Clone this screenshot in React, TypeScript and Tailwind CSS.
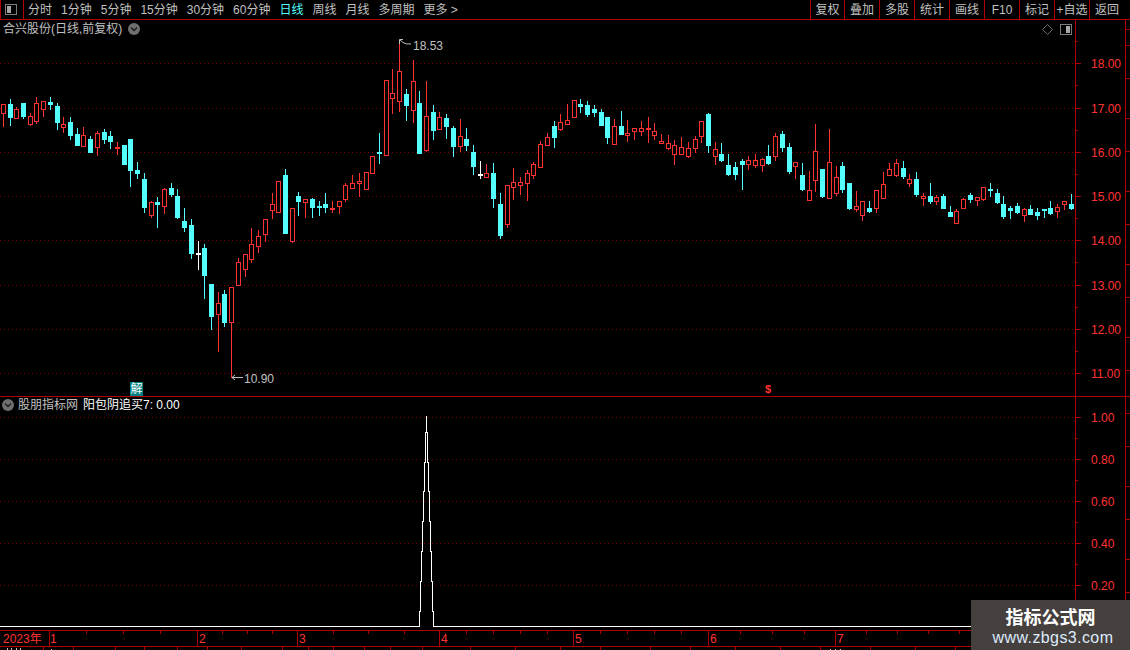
// 日线K线图 + 副图指标
import React from "react";

const RED = "#ff3232";
const LINE = "#b00000";
const DOT = "#800000";
const GRAY = "#c0c0c0";
const CYAN = "#54ffff";
const FONT = "font-['Liberation_Sans','Noto_Sans_CJK_SC',sans-serif]";

// [type, wickTop, bodyTop, bodyBottom, wickBottom] 単位はページのpx
type Candle = ["r" | "c" | "w", number, number, number, number];

const candles: Candle[] = [
  ["r",104,104,113,126],["c",99,104,117,125],["r",107,109,118,118],["c",103,103,116,118],["r",113,116,124,125],
  ["r",97,103,121,123],["r",101,101,109,116],["c",97,102,104,109],["c",103,106,122,129],["r",117,124,127,132],
  ["c",117,122,135,139],["c",128,134,145,145],["r",127,135,146,146],["c",136,139,152,152],["r",131,133,147,155],
  ["c",129,132,139,143],["c",131,136,141,148],["r",142,147,148,154],["c",145,145,164,164],["c",139,139,170,186],
  ["c",162,170,173,178],["c",173,179,207,212],["r",201,202,215,217],["c",197,202,204,227],["r",188,189,206,213],
  ["c",183,188,194,196],["c",189,196,217,218],["c",208,221,227,231],["c",219,225,253,258],["w",241,253,254,269],
  ["c",244,248,275,298],["c",284,284,316,329],["r",292,303,314,351],["c",290,294,322,326],["r",287,287,322,377],
  ["r",258,262,285,285],["r",254,254,269,276],["r",228,244,259,262],["r",230,236,246,252],["r",219,219,234,241],
  ["r",193,204,210,218],["r",181,181,212,212],["c",169,175,233,233],["r",208,208,241,242],["c",192,196,201,215],
  ["r",199,199,202,217],["c",198,199,207,217],["c",201,206,207,215],["c",193,204,207,212],["r",201,208,209,212],
  ["r",201,201,206,213],["r",183,185,199,201],["r",175,183,188,188],["r",173,181,183,196],["r",172,172,189,189],
  ["r",156,156,173,173],["c",133,152,153,163],["r",80,80,155,155],["r",69,93,98,113],["r",43,71,101,111],
  ["c",89,94,105,120],["r",60,81,110,122],["c",91,103,153,153],["r",81,116,150,151],["c",105,112,130,139],
  ["r",112,117,129,129],["c",114,118,126,138],["c",126,128,146,156],["r",119,136,146,151],["c",128,139,145,150],
  ["c",145,152,166,174],["w",161,174,175,178],["r",164,173,177,177],["c",163,173,198,207],["c",193,204,235,238],
  ["r",185,185,224,227],["r",168,182,187,199],["r",177,182,185,194],["r",170,173,183,200],["r",162,164,175,178],
  ["r",141,144,167,167],["r",133,137,145,145],["c",121,126,137,147],["r",114,122,129,130],["r",104,120,124,124],
  ["r",100,100,117,117],["c",99,104,106,112],["c",101,105,114,116],["c",105,109,112,116],["c",109,112,125,125],
  ["c",117,117,137,143],["r",119,126,144,144],["c",111,126,134,134],["r",120,133,135,141],["r",128,128,131,139],
  ["r",121,128,131,135],["r",117,128,129,142],["r",123,131,135,139],["r",134,141,143,143],["r",135,143,148,149],
  ["r",140,145,154,164],["r",137,147,154,154],["r",142,148,156,157],["r",136,139,148,152],["r",121,121,136,142],
  ["c",113,114,145,152],["r",142,149,156,164],["c",143,154,160,161],["c",154,165,174,175],["c",162,167,174,179],
  ["c",159,161,164,189],["r",156,160,164,169],["r",154,160,165,167],["r",158,159,165,171],["c",145,156,163,164],
  ["r",133,136,156,160],["c",131,134,147,151],["c",143,147,171,173],["r",162,162,166,178],["c",163,175,189,190],
  ["r",171,190,200,200],["r",124,151,180,191],["c",169,169,196,197],["r",129,162,198,198],["r",166,177,193,195],
  ["c",162,166,189,192],["c",183,183,208,209],["r",191,206,209,211],["r",201,201,215,220],["c",201,208,211,212],
  ["r",190,190,208,212],["r",172,184,198,198],["r",163,169,175,175],["r",159,163,175,176],["c",161,168,176,178],
  ["r",174,179,183,186],["c",172,179,194,196],["r",193,196,198,205],["c",183,196,201,203],["r",195,197,201,204],
  ["c",194,196,208,208],["c",206,212,216,216],["r",209,211,223,223],["r",198,199,208,208],["c",193,195,199,202],
  ["r",197,197,200,205],["r",187,187,199,200],["c",183,189,190,196],["c",189,193,202,203],["c",196,204,216,218],
  ["c",206,208,210,218],["c",203,206,212,213],["r",208,209,215,221],["c",205,209,214,214],["c",208,212,215,219],
  ["c",209,209,210,217],["c",201,208,213,214],["r",204,207,211,217],["r",201,201,204,209],["c",194,204,208,209],
];

const priceLabels = [
  { y: 63, t: "18.00" }, { y: 108, t: "17.00" }, { y: 152, t: "16.00" }, { y: 196, t: "15.00" },
  { y: 240, t: "14.00" }, { y: 285, t: "13.00" }, { y: 329, t: "12.00" }, { y: 373, t: "11.00" },
];
const priceMinor = [41, 85, 130, 174, 218, 262, 307, 351];
const indLabels = [
  { y: 417, t: "1.00" }, { y: 459, t: "0.80" }, { y: 501, t: "0.60" }, { y: 543, t: "0.40" }, { y: 585, t: "0.20" },
];
const indMinor = [438, 480, 522, 564, 606];
const sideTicks = [29, 45, 78, 118, 151, 191, 224, 264, 297, 337, 370, 413, 446, 486, 519, 559, 592];

const leftTabs = ["分时", "1分钟", "5分钟", "15分钟", "30分钟", "60分钟", "日线", "周线", "月线", "多周期", "更多 >"];
const rightTabs = ["复权", "叠加", "多股", "统计", "画线", "F10", "标记", "+自选", "返回"];

const months = [
  { x: 49, t: "1" }, { x: 197, t: "2" }, { x: 297, t: "3" }, { x: 439, t: "4" },
  { x: 573, t: "5" }, { x: 708, t: "6" }, { x: 835, t: "7" },
];
const monthMinor = [86, 123, 160, 222, 247, 272, 333, 368, 404, 466, 493, 520, 547, 600, 627, 654, 681, 740, 772, 804, 866, 897, 928, 959];
const stripTicks = [43, 73, 115, 144, 177, 207, 241, 282, 308, 333, 364, 390, 422, 470, 515, 560, 600, 650, 690, 735, 780, 820, 870, 915, 955];

// 丸いシェブロンボタン
const ChevronDot = () => (
  <svg width="12" height="12" viewBox="0 0 12 12" className="shrink-0">
    <circle cx="6" cy="6" r="6" fill="#6f6f6f" />
    <path d="M3 4.6 L6 7.6 L9 4.6" fill="none" stroke="#1c1c1c" strokeWidth="1.4" />
  </svg>
);

// パネル切替アイコン
const PanelIcon = ({ side }: { side: "left" | "right" }) => (
  <svg width="12" height="11" viewBox="0 0 12 11" className="shrink-0" shapeRendering="crispEdges">
    <rect x="0.5" y="0.5" width="11" height="10" rx="1" fill="#000" stroke="#7c7c7c" />
    <rect x={side === "left" ? 2 : 6} y="2" width="4" height="7" fill="#a8a8a8" />
  </svg>
);

const Toolbar = () => (
  <div className={`flex h-[20px] shrink-0 items-center border-b border-[#b00000] text-[12px] text-[#c0c0c0] ${FONT}`}>
    <div className="flex h-full w-[24px] shrink-0 items-center border-x border-[#b00000] pl-[4px]">
      <PanelIcon side="left" />
    </div>
    <div className="ml-[4px] flex gap-[9px]">
      {leftTabs.map((t) => (
        <span key={t} className={t === "日线" ? "text-[#54ffff]" : ""}>
          {t}
        </span>
      ))}
    </div>
    <div className="ml-auto flex h-full pr-[6px]">
      {rightTabs.map((t, i) => (
        <div
          key={t}
          className={`flex h-full items-center justify-center border-l border-[#b00000] whitespace-nowrap ${i === 0 ? "w-[34px]" : "w-[35px]"}`}
        >
          {t}
        </div>
      ))}
    </div>
  </div>
);

const CandleMark = ({ c, i }: { c: Candle; i: number }) => {
  const [type, wt, bt, bb, wb] = c;
  const x = Math.floor(3.4 + 6.715 * i) + 0.5;
  const color = type === "r" ? RED : type === "c" ? CYAN : "#ffffff";
  return (
    <g>
      <line x1={x} x2={x} y1={wt} y2={wb + 1} stroke={color} />
      {type === "r" ? (
        <rect x={x - 2} y={bt + 0.5} width={4} height={bb - bt} fill="#000" stroke={color} />
      ) : (
        <rect x={x - 2.5} y={bt} width={5} height={bb - bt + 1} fill={color} />
      )}
    </g>
  );
};

const Axis = ({
  top,
  h,
  labels,
  minor,
}: {
  top: number;
  h: number;
  labels: { y: number; t: string }[];
  minor: number[];
}) => (
  <svg width="49" height={h} viewBox={`1076 ${top} 49 ${h}`} className="block">
    <g shapeRendering="crispEdges" stroke={LINE}>
      {labels.map((l) => (
        <line key={l.y} x1={1076} x2={1081} y1={l.y + 0.5} y2={l.y + 0.5} />
      ))}
      {minor.map((y) => (
        <line key={y} x1={1076} x2={1078} y1={y + 0.5} y2={y + 0.5} />
      ))}
    </g>
    {labels.map((l) => (
      <text key={l.t} x={1091} y={l.y + 5} fill={RED} fontSize="12" fontFamily="Liberation Sans">
        {l.t}
      </text>
    ))}
  </svg>
);

const SideStrip = ({ top, h }: { top: number; h: number }) => (
  <div className="flex-1 border-l border-[#b00000]">
    <svg width="4" height={h} viewBox={`1126 ${top} 4 ${h}`} className="block" shapeRendering="crispEdges">
      {sideTicks.map((y) => (
        <line key={y} x1={1126} x2={1130} y1={y + 0.5} y2={y + 0.5} stroke={LINE} />
      ))}
    </svg>
  </div>
);

const PricePanel = () => (
  <div className={`relative flex h-[377px] shrink-0 border-b border-[#b00000] ${FONT}`}>
    <svg width="1075" height="376" viewBox="0 20 1075 376" className="block shrink-0">
      <g shapeRendering="crispEdges">
        {priceLabels.map((l) => (
          <line key={l.y} x1={0} x2={1075} y1={l.y + 0.5} y2={l.y + 0.5} stroke={DOT} strokeDasharray="1 3" />
        ))}
        {candles.map((c, i) => (
          <CandleMark key={i} c={c} i={i} />
        ))}
      </g>
      {/* 最高値 / 最低値 */}
      <path d="M399.5 44 V39.5 H403 M400 40 L403 42.5 M403 42.5 Q406 44.5 411 44" fill="none" stroke={GRAY} />
      <text x={413} y={50} fill={GRAY} fontSize="12" fontFamily="Liberation Sans">18.53</text>
      <path d="M232 377.5 H243 M232 377.5 L235 375 M232 377.5 L235 380" fill="none" stroke={GRAY} />
      <text x={244} y={383} fill={GRAY} fontSize="12" fontFamily="Liberation Sans">10.90</text>
    </svg>
    <div className="w-[50px] shrink-0 border-l border-[#b00000]">
      <Axis top={20} h={376} labels={priceLabels} minor={priceMinor} />
    </div>
    <SideStrip top={20} h={376} />

    {/* タイトル */}
    <div className="absolute top-[2px] left-[3px] flex items-center gap-[6px] text-[12px] leading-[14px] text-[#c0c0c0]">
      <span>合兴股份(日线,前复权)</span>
      <ChevronDot />
    </div>
    <div className="absolute top-[4px] left-[1042px] flex items-center gap-[7px]">
      <svg width="11" height="11" viewBox="0 0 11 11">
        <path d="M5.5 0.5 L10.5 5.5 L5.5 10.5 L0.5 5.5 Z" fill="none" stroke="#6c6c6c" />
      </svg>
      <PanelIcon side="right" />
    </div>

    {/* 信号マーク */}
    <div className="absolute top-[362px] left-[130px] flex h-[14px] w-[13px] items-center justify-center bg-[#008080] text-[12px] text-white">
      解
    </div>
    <div className="absolute top-[363px] left-[765px] text-[11px] leading-[13px] font-bold text-[#ff3232]">$</div>
  </div>
);

// 7段の細いスパイク
const spikeLeft = "M0 626.5 H419.5 V611 H420.5 V581 H421.5 V551 H422.5 V521 H423.5 V491 H424.5 V462 H425.5 V432 H426.5 V416";
const spikeRight = "M426.5 416 V432 H427.5 V462 H428.5 V491 H429.5 V521 H430.5 V551 H431.5 V581 H432.5 V611 H433.5 V626.5 H1075";

const IndicatorPanel = () => (
  <div className={`relative flex h-[234px] shrink-0 border-b border-[#b00000] ${FONT}`}>
    <svg width="1075" height="233" viewBox="0 397 1075 233" className="block shrink-0" shapeRendering="crispEdges">
      {indLabels.map((l) => (
        <line key={l.y} x1={0} x2={1075} y1={l.y + 0.5} y2={l.y + 0.5} stroke={DOT} strokeDasharray="1 3" />
      ))}
      <path d={spikeLeft} fill="none" stroke="#fff" />
      <path d={spikeRight} fill="none" stroke="#fff" />
    </svg>
    <div className="w-[50px] shrink-0 border-l border-[#b00000]">
      <Axis top={397} h={233} labels={indLabels} minor={indMinor} />
    </div>
    <SideStrip top={397} h={233} />

    <div className="absolute top-[1px] left-[2px] flex items-center gap-[4px] text-[12px] leading-[14px]">
      <ChevronDot />
      <span className="text-[#c0c0c0]">股朋指标网</span>
      <span className="ml-[1px] text-white">阳包阴追买7: 0.00</span>
    </div>
  </div>
);

const TimeAxis = () => (
  <div className={`relative flex h-[16px] shrink-0 items-center border-b border-[#b00000] text-[12px] text-[#ff3232] ${FONT}`}>
    <span className="ml-[3px] leading-[14px]">2023年</span>
    <svg width="1130" height="15" viewBox="0 0 1130 15" className="absolute top-0 left-0" shapeRendering="crispEdges">
      {monthMinor.map((x) => (
        <line key={x} x1={x + 0.5} x2={x + 0.5} y1={0} y2={3} stroke={LINE} />
      ))}
      {months.map((m) => (
        <g key={m.x}>
          <line x1={m.x + 0.5} x2={m.x + 0.5} y1={0} y2={15} stroke={LINE} />
          <text x={m.x + (m.t === "1" ? 1 : 2)} y={12} fill={RED} fontSize="12" fontFamily="Liberation Sans">
            {m.t}
          </text>
        </g>
      ))}
    </svg>
  </div>
);

const BottomStrip = () => (
  <svg width="1130" height="3" viewBox="0 0 1130 3" className="block shrink-0" shapeRendering="crispEdges">
    {stripTicks.map((x) => (
      <line key={x} x1={x + 0.5} x2={x + 0.5} y1={0} y2={3} stroke={LINE} />
    ))}
    <path d="M7.5 1 V3 M11.5 1 V3 M16.5 1 V3 M20.5 1 V3 M51.5 2 V3 M830.5 2 V3 M835.5 2 V3 M840.5 2 V3" stroke="#c0c0c0" />
  </svg>
);

const App = () => {
  return (
    <div className="relative flex h-[650px] w-[1130px] flex-col overflow-hidden bg-black">
      <Toolbar />
      <PricePanel />
      <IndicatorPanel />
      <TimeAxis />
      <BottomStrip />
      {/* ウォーターマーク */}
      <div className="absolute right-0 bottom-0 flex h-[50px] w-[159px] flex-col items-center bg-[#453f3e]">
        <span className="mt-[4px] text-[18px] leading-[24px] font-bold text-white font-['Noto_Sans_CJK_SC',sans-serif]">
          指标公式网
        </span>
        <span className="ml-[5px] text-[16px] leading-[20px] tracking-[0.4px] text-[#dcebfa] font-['Liberation_Sans',sans-serif]">
          www.zbgs3.com
        </span>
      </div>
    </div>
  );
};

export default App;
